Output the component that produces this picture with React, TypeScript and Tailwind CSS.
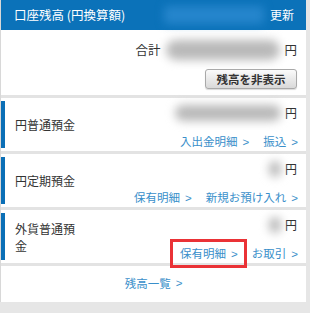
import React from 'react';

const Chevron = () => <span className="ml-[5px] font-['Liberation_Sans',sans-serif]">&gt;</span>;

const Blur = ({ w, h = 20 }: { w: number; h?: number }) => (
  <div className="relative" style={{ width: w, height: h }}>
    <div className="absolute inset-[2px] rounded-full bg-[#b9b9b9] blur-[5px]" />
  </div>
);

const AccountCard = ({
  title,
  amountWidth,
  links,
  highlight,
}: {
  title: string;
  amountWidth: number;
  links: string[];
  highlight?: number;
}) => (
  <div className="flex h-[53px] bg-white">
    <div className="my-[3px] w-[4px] bg-[#0b6fb6]" />
    <div className="flex-1 flex">
      <div className="w-[72px] pl-[10px] flex items-center text-[12px] leading-[17px] text-[#333]">
        {title}
      </div>
      <div className="flex-1">
        <div className="flex items-center justify-end pr-[9px] pt-[4px] h-[26px]">
          <Blur w={amountWidth} />
          <span className="ml-[2px] text-[12px] text-[#333]">円</span>
        </div>
        <div className="flex justify-end pr-[8px] gap-[14px] text-[11.5px] text-[#3a8fca] leading-[20px] mt-[7px]">
          {links.map((l, i) => (
            <span key={l} className="relative">
              {l}
              <Chevron />
              {i === highlight && (
                <span className="absolute -left-[10px] -right-[9px] -top-[4px] -bottom-[4px] border-[3px] border-[#ea3236]" />
              )}
            </span>
          ))}
        </div>
      </div>
    </div>
  </div>
);

export default function App() {
  return (
    <div className="w-[310px] h-[313px] bg-[#e6e6e6] font-['Noto_Sans_CJK_JP','Noto_Sans',sans-serif] overflow-hidden">
      <div className="w-[306px] bg-[#e3e3e3] border-l border-[#d8d8d8]">
        {/* header */}
        <div className="h-[30px] bg-[#0b72b9] flex items-center pl-[13px] pr-[12px] text-white text-[12.5px]">
          <span>口座残高 (円換算額)</span>
          <div className="flex-1 flex justify-end pr-[6px]">
            <div className="w-[100px] h-[18px] rounded bg-[#2585cc] blur-[4px]" />
          </div>
          <span className="text-[12px]">更新</span>
        </div>

        {/* total */}
        <div className="bg-white h-[65px] flex flex-col items-end pr-[9px] pt-[8px]">
          <div className="flex items-center h-[24px] text-[12.5px] text-[#333]">
            <span>合計</span>
            <div className="ml-[4px]">
              <Blur w={118} h={24} />
            </div>
            <span className="ml-[2px]">円</span>
          </div>
          <button className="mt-[7px] h-[20px] w-[92px] rounded-[3px] border border-[#a9a9a9] bg-gradient-to-b from-[#fbfbfb] to-[#d9d9d9] text-[11.5px] font-bold text-[#333] leading-[18px] shadow-[0_1px_1px_rgba(0,0,0,0.15)]">
            残高を非表示
          </button>
        </div>

        <div className="flex flex-col gap-[3px] pt-[3px]">
          <AccountCard title="円普通預金" amountWidth={110} links={['入出金明細', '振込']} />
          <AccountCard title="円定期預金" amountWidth={16} links={['保有明細', '新規お預け入れ']} />
          <AccountCard title="外貨普通預金" amountWidth={16} links={['保有明細', 'お取引']} highlight={0} />
          <div className="h-[36px] bg-white flex items-center justify-center text-[11.5px] text-[#3a8fca]">
            残高一覧
            <Chevron />
          </div>
        </div>
      </div>
    </div>
  );
}
